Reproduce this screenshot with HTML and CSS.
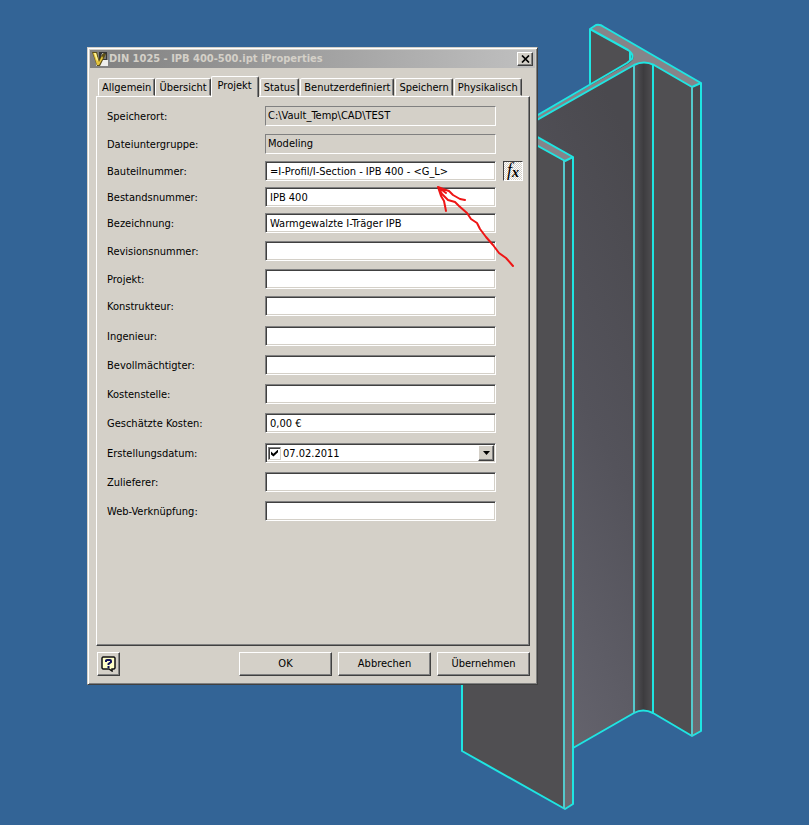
FILE: index.html
```html
<!DOCTYPE html>
<html lang="de">
<head>
<meta charset="utf-8">
<title>DIN 1025 - IPB 400-500.ipt iProperties</title>
<link rel="stylesheet" href="styles.css">
</head>
<body>
<main class="viewport">
  <svg class="model" width="809" height="825" viewBox="0 0 809 825" aria-hidden="true">
    <defs>
      <linearGradient id="web" x1="0.7" y1="0" x2="0.3" y2="1">
        <stop offset="0" stop-color="#4a494e"/><stop offset=".45" stop-color="#54535b"/><stop offset="1" stop-color="#676670"/>
      </linearGradient>
      <linearGradient id="fillet">
        <stop offset="0" stop-color="#555459"/><stop offset=".5" stop-color="#3d3c3f"/><stop offset="1" stop-color="#504f52"/>
      </linearGradient>
      <linearGradient id="edge" x1="0" y1="0" x2="0" y2="1">
        <stop offset="0" stop-color="#49484c"/><stop offset="1" stop-color="#6c6b72"/>
      </linearGradient>
    </defs>
    <path fill="#504f52" d="M591 29 634 52V70L591 90Z"/>
    <path fill="url(#web)" d="M500 140 634 66V713L573 748V400L500 400Z"/>
    <path fill="url(#fillet)" d="M634 66Q643 60 653 65V713Q643 709 634 713Z"/>
    <path fill="#504f52" d="M653 65 692 87V736L653 713Z"/>
    <path fill="url(#edge)" d="M692 87 701 83V731L692 736Z"/>
    <path fill="#858489" d="M591 29 597 25Q600 24 604 27L701 83 692 87 654 65Q644 60 634 65L500 141V137L628 64Q638 58 630 52Z"/>
    <path fill="#504f52" d="M462 102 565 161V809L462 751Z"/>
    <path fill="url(#edge)" d="M565 161 573 157V804L565 809Z"/>
    <path fill="#858489" d="M500 116 573 157 565 161 500 125Z"/>
    <g fill="none" stroke="#1fe5e2" stroke-width="2" stroke-linejoin="round">
      <path d="M590 84V29L596 25Q600 24 604 27L701 83 692 87 654 65Q644 60 634 65L500 141"/>
      <path d="M590 29 628 50Q634 54 632 59L627 63 500 137M630 52V61"/>
      <path d="M701 83V731L692 736 653 713Q643 708 634 713L573 748M653 65V713"/>
      <path d="M500 116 573 157V804L565 809 462 751V600M500 125 565 161 573 157"/>
      <path stroke="#54c9cc" d="M634 66V713M692 87V736M564 161V809"/>
    </g>
  </svg>

  <section class="dialog" aria-labelledby="dialog-title">
    <header class="titlebar">
      <svg class="app-icon" width="16" height="16" viewBox="0 0 16 16" aria-hidden="true">
        <path fill="#353536" d="M7 1h8v9H7z"/><path fill="#eeeeec" d="M5 9h11v6H4z"/>
        <path fill="#777" d="M9 3h5v5H9z"/><path fill="#dcdce0" d="M10 2h2v3h-2z"/>
        <path fill="#5d5018" d="M0 1h5l2 8 4-7 3 1-6 12H5z"/><path fill="#e5c43c" d="M1 2h3l3 9 3-6 1 2-4 7H5z"/>
        <path fill="#fff39a" d="M2 2h2l2 7-1 1z"/>
      </svg>
      <h1 id="dialog-title">DIN 1025 - IPB 400-500.ipt iProperties</h1>
      <button class="raised close" type="button" aria-label="Schließen">
        <svg width="9" height="8" viewBox="0 0 9 8" aria-hidden="true"><path d="M1 0.500 8 7.500M8 0.500 1 7.500" stroke="#000" stroke-width="1.700"/></svg>
      </button>
    </header>

    <div class="tabs" role="tablist">
      <button class="tab" type="button" role="tab">Allgemein</button>
      <button class="tab" type="button" role="tab">Übersicht</button>
      <button class="tab active" type="button" role="tab" aria-selected="true">Projekt</button>
      <button class="tab" type="button" role="tab">Status</button>
      <button class="tab" type="button" role="tab">Benutzerdefiniert</button>
      <button class="tab" type="button" role="tab">Speichern</button>
      <button class="tab" type="button" role="tab">Physikalisch</button>
    </div>

    <form class="panel">
      <label for="ort">Speicherort:</label><input class="readonly" id="ort" type="text" value="C:\Vault_Temp\CAD\TEST" readonly>
      <label for="gruppe">Dateiuntergruppe:</label><input class="readonly" id="gruppe" type="text" value="Modeling" readonly>
      <label for="bauteil">Bauteilnummer:</label><input id="bauteil" type="text" value="=I-Profil/I-Section - IPB 400 - &lt;G_L&gt;">
      <button class="formula" type="button" aria-label="Formel"><span>f</span><sub>x</sub></button>
      <label for="bestand">Bestandsnummer:</label><input id="bestand" type="text" value="IPB 400">
      <label for="bez">Bezeichnung:</label><input id="bez" type="text" value="Warmgewalzte I-Träger IPB">
      <label for="rev">Revisionsnummer:</label><input id="rev" type="text">
      <label for="projekt">Projekt:</label><input id="projekt" type="text">
      <label for="konstr">Konstrukteur:</label><input id="konstr" type="text">
      <label for="ing">Ingenieur:</label><input id="ing" type="text">
      <label for="bevoll">Bevollmächtigter:</label><input id="bevoll" type="text">
      <label for="stelle">Kostenstelle:</label><input id="stelle" type="text">
      <label for="kosten">Geschätzte Kosten:</label><input id="kosten" type="text" value="0,00 €">
      <label for="datum">Erstellungsdatum:</label>
      <div class="date">
        <input class="check" type="checkbox" aria-label="Datum verwenden" checked>
        <input class="date-text" id="datum" type="text" value="07.02.2011">
        <button class="raised drop" type="button" aria-label="Kalender öffnen">
          <svg width="7" height="4" viewBox="0 0 7 4" aria-hidden="true"><path d="M0 0h7L3.500 4Z"/></svg>
        </button>
      </div>
      <label for="zulieferer">Zulieferer:</label><input id="zulieferer" type="text">
      <label for="web-link">Web-Verknüpfung:</label><input id="web-link" type="text">
    </form>

    <footer class="actions">
      <button class="raised help" type="button" aria-label="Hilfe">
        <svg width="15" height="16" viewBox="0 0 15 16" aria-hidden="true">
          <path fill="#ffffc8" stroke="#111" stroke-width="1.500" d="M2 1h11l1 1v10l-1 1h-2v2l-3-2H2l-1-1V2z"/>
          <path fill="none" stroke="#10105a" stroke-width="2" d="M5 6V4.500Q5 4 6 4H9Q10 4 10 5V6L7.500 8V9M7.500 10V12"/>
        </svg>
      </button>
      <button class="raised" type="button">OK</button>
      <button class="raised" type="button">Abbrechen</button>
      <button class="raised" type="button">Übernehmen</button>
    </footer>
  </section>

  <svg class="arrow" width="80" height="90" viewBox="435 180 80 90" aria-hidden="true">
    <path fill="none" stroke="#ee1515" stroke-width="2" stroke-linecap="round" stroke-linejoin="round" d="M513 266 506 258 499 253 493 245 486 237 480 229 477 223 471 219 467 213 459 206 455 202 448 200 442 194 438 187 443 189 449 191 453 195 460 199 465 200M438 187 441 196 444 201 446 211M438 187 446 193"/>
  </svg>
</main>
</body>
</html>
```
FILE: styles.css
```css
* {
  box-sizing: border-box;
}

body {
  margin: 0;
  background: #336496;
  color: #000;
  font: 11px/14px "DejaVu Sans Condensed", "DejaVu Sans", sans-serif;
}

.viewport {
  position: relative;
  min-height: 100vh;
  overflow: hidden;
}

.model {
  position: absolute;
  left: 0;
  top: 0;
}

.arrow {
  position: absolute;
  left: 435px;
  top: 180px;
  pointer-events: none;
}

.dialog {
  position: absolute;
  left: 87px;
  top: 47px;
  width: 451px;
  padding: 2px;
  background: #d4d0c8;
  border: 1px solid;
  border-color: #d4d0c8 #404040 #404040 #d4d0c8;
  box-shadow: inset 1px 1px #fff, inset -1px -1px #808080;
}

button,
input {
  margin: 0;
  font: inherit;
  color: inherit;
}

button {
  padding: 0;
  background: #d4d0c8;
  border: 0;
}

.raised {
  display: flex;
  align-items: center;
  justify-content: center;
  border: 1px solid;
  border-color: #fff #404040 #404040 #fff;
  box-shadow: inset -1px -1px #808080;
}

.titlebar {
  display: flex;
  align-items: center;
  height: 18px;
  padding: 0 2px;
  background: linear-gradient(90deg, #808080, #c0c0c0);
}

.titlebar h1 {
  flex: 1;
  margin: 0 0 0 1px;
  color: #d4d0c8;
  font-size: 11px;
  font-weight: bold;
  white-space: nowrap;
}

.close {
  width: 16px;
  height: 14px;
}

.tabs {
  display: flex;
  align-items: flex-end;
  height: 28px;
  padding: 0 7px 0 8px;
}

.tab {
  flex: none;
  height: 18px;
  padding: 2px 3px 0;
  border: 1px solid;
  border-color: #fff #404040 transparent #fff;
  border-radius: 2px 2px 0 0;
  box-shadow: inset -1px 0 #808080;
  white-space: nowrap;
}

.tab.active {
  height: 21px;
  margin-bottom: -1px;
  padding: 0 6px 2px;
  border-bottom: 0;
  z-index: 1;
}

.tab.active ~ .tab {
  margin-left: 1px;
}

.panel {
  display: grid;
  grid-template-columns: 158px 231px 19px;
  grid-template-rows: 28px 27px 26px 26px 28px 28px 27px 30px 29px 29px 29px 30px 29px 29px 20px;
  align-items: start;
  margin: 0 5px 0 6px;
  padding: 9px 10px 124px;
  border: 1px solid;
  border-color: #fff #404040 #404040 #fff;
  box-shadow: inset -1px -1px #808080;
}

.panel label {
  grid-column: 1;
  line-height: 22px;
}

.panel > input,
.date {
  grid-column: 2;
  width: 100%;
  height: 20px;
  padding: 0 4px;
  background: #fff;
  border: 1px solid;
  border-color: #808080 #fff #fff #808080;
  box-shadow: inset 1px 1px #404040, inset -1px -1px #d4d0c8;
}

.panel > .readonly {
  padding: 0 2px 2px;
  background: #d4d0c8;
  box-shadow: none;
}

.formula {
  grid-column: 3;
  justify-self: end;
  display: flex;
  justify-content: center;
  width: 20px;
  height: 20px;
  margin-right: -8px;
  background: repeating-conic-gradient(#fff 0 25%, #d4d0c8 0 50%) 0 0 / 2px 2px;
  border: 1px solid;
  border-color: #404040 #fff #fff #404040;
  font: italic 18px/16px "Liberation Serif", serif;
}

.formula sub {
  font-size: 14px;
  font-weight: bold;
  line-height: 22px;
  vertical-align: baseline;
}

.panel > .date {
  display: flex;
  align-items: center;
  padding: 1px 1px 1px 2px;
}

.check {
  appearance: none;
  width: 13px;
  height: 13px;
  background: #fff;
  border: 1px solid;
  border-color: #808080 #d4d0c8 #d4d0c8 #808080;
  box-shadow: inset 1px 1px #404040;
}

.check:checked::before {
  content: "";
  display: block;
  width: 7px;
  height: 7px;
  margin: 2px;
  background: #000;
  clip-path: polygon(0 30%, 35% 60%, 100% 0, 100% 40%, 35% 100%, 0 70%);
}

.date-text {
  flex: 1;
  min-width: 0;
  height: 16px;
  padding: 0 2px;
  background: none;
  border: 0;
}

.drop {
  width: 16px;
  height: 16px;
}

.actions {
  display: flex;
  gap: 6px;
  padding: 6px 5px 6px 7px;
}

.actions .raised {
  width: 93px;
  height: 24px;
}

.actions .help {
  width: 23px;
  margin-right: auto;
}
```
